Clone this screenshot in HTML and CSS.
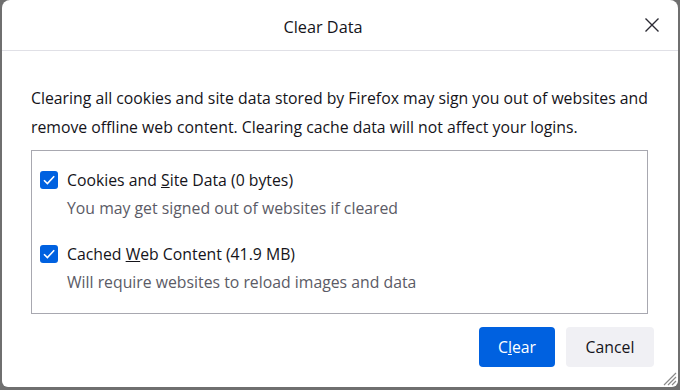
FILE: index.html
```html
<!DOCTYPE html>
<html>
<head>
<meta charset="utf-8">
<link rel="stylesheet" href="styles.css">
</head>
<body>
<div class="dialog">
  <div class="header">
    <div class="title">Clear Data</div>
    <div class="close-wrap">
      <svg class="close" width="16" height="16" viewBox="0 0 16 16"><path d="M1.5 1.5 L14.5 14.5 M14.5 1.5 L1.5 14.5" stroke="#2b2a33" stroke-width="1.4" fill="none"/></svg>
    </div>
  </div>
  <div class="content">
    <p class="intro">Clearing all cookies and site data stored by Firefox may sign you out of websites and remove offline web content. Clearing cache data will not affect your logins.</p>
    <div class="group">
      <div class="item">
        <div class="row">
          <span class="check"><svg width="18" height="18" viewBox="0 0 18 18"><path d="M4 9.2 L7.4 12.6 L14.2 5.2" stroke="#fff" stroke-width="1.6" fill="none"/></svg></span>
          <span class="label">Cookies and <u>S</u>ite Data (0 bytes)</span>
        </div>
        <div class="sub">You may get signed out of websites if cleared</div>
      </div>
      <div class="item">
        <div class="row">
          <span class="check"><svg width="18" height="18" viewBox="0 0 18 18"><path d="M4 9.2 L7.4 12.6 L14.2 5.2" stroke="#fff" stroke-width="1.6" fill="none"/></svg></span>
          <span class="label">Cached <u>W</u>eb Content (41.9 MB)</span>
        </div>
        <div class="sub">Will require websites to reload images and data</div>
      </div>
    </div>
    <div class="buttons">
      <button class="btn primary">C<u>l</u>ear</button>
      <button class="btn secondary">Cancel</button>
    </div>
  </div>
  <svg class="grip" width="18" height="18" viewBox="0 0 18 18"><path d="M17 5 L5 17 M17 9 L9 17 M17 13 L13 17" stroke="#8a8a8a" stroke-width="1.2" fill="none"/></svg>
</div>
</body>
</html>
```
FILE: styles.css
```css
html, body {
  margin: 0;
  padding: 0;
}
body {
  width: 680px;
  height: 390px;
  background: #6f6f6f;
  font-family: "Open Sans", "Noto Sans", sans-serif;
  color: #15141a;
  overflow: hidden;
}
.dialog {
  position: relative;
  margin-left: 2px;
  width: 676px;
  height: 387px;
  background: #fff;
  border-radius: 8px 8px 6px 6px;
  display: flex;
  flex-direction: column;
}
.header {
  height: 50px;
  border-bottom: 1px solid #e0e0e6;
  display: flex;
  align-items: center;
  box-sizing: content-box;
}
.title {
  flex: 1;
  text-align: center;
  font-size: 16.3px;
  padding-top: 3px;
}
.close-wrap {
  width: 34px;
  box-sizing: border-box;
  display: flex;
  justify-content: flex-end;
  padding-right: 18px;
}
.close { display: block; flex: none; }
.content {
  padding: 33px 24px 0 29px;
}
.intro {
  margin: 0;
  font-size: 15.8px;
  line-height: 29px;
  width: 632px;
}
.group {
  margin-top: 8px;
  width: 607px;
  border: 1px solid #a8a8b0;
  padding: 15px 0 17px 8px;
  box-sizing: content-box;
  display: flex;
  flex-direction: column;
  gap: 18px;
}
.row {
  display: flex;
  align-items: center;
  height: 28px;
  gap: 9px;
}
.check {
  width: 18px;
  height: 18px;
  background: #0061e0;
  border-radius: 3px;
  display: block;
}
.check svg { display: block; }
.label {
  font-size: 15.8px;
}
.sub {
  height: 28px;
  line-height: 28px;
  padding-left: 27px;
  font-size: 15.8px;
  color: #5b5b66;
}
.buttons {
  margin-top: 13px;
  display: flex;
  justify-content: flex-end;
  gap: 11px;
}
.btn {
  height: 40px;
  border: none;
  border-radius: 4px;
  font-family: inherit;
  font-size: 15.8px;
  padding: 0;
}
.primary {
  width: 76px;
  background: #0061e0;
  color: #fff;
}
.secondary {
  width: 88px;
  background: #f0f0f4;
  color: #15141a;
}
.grip {
  position: absolute;
  right: 1px;
  bottom: 1px;
}
```
